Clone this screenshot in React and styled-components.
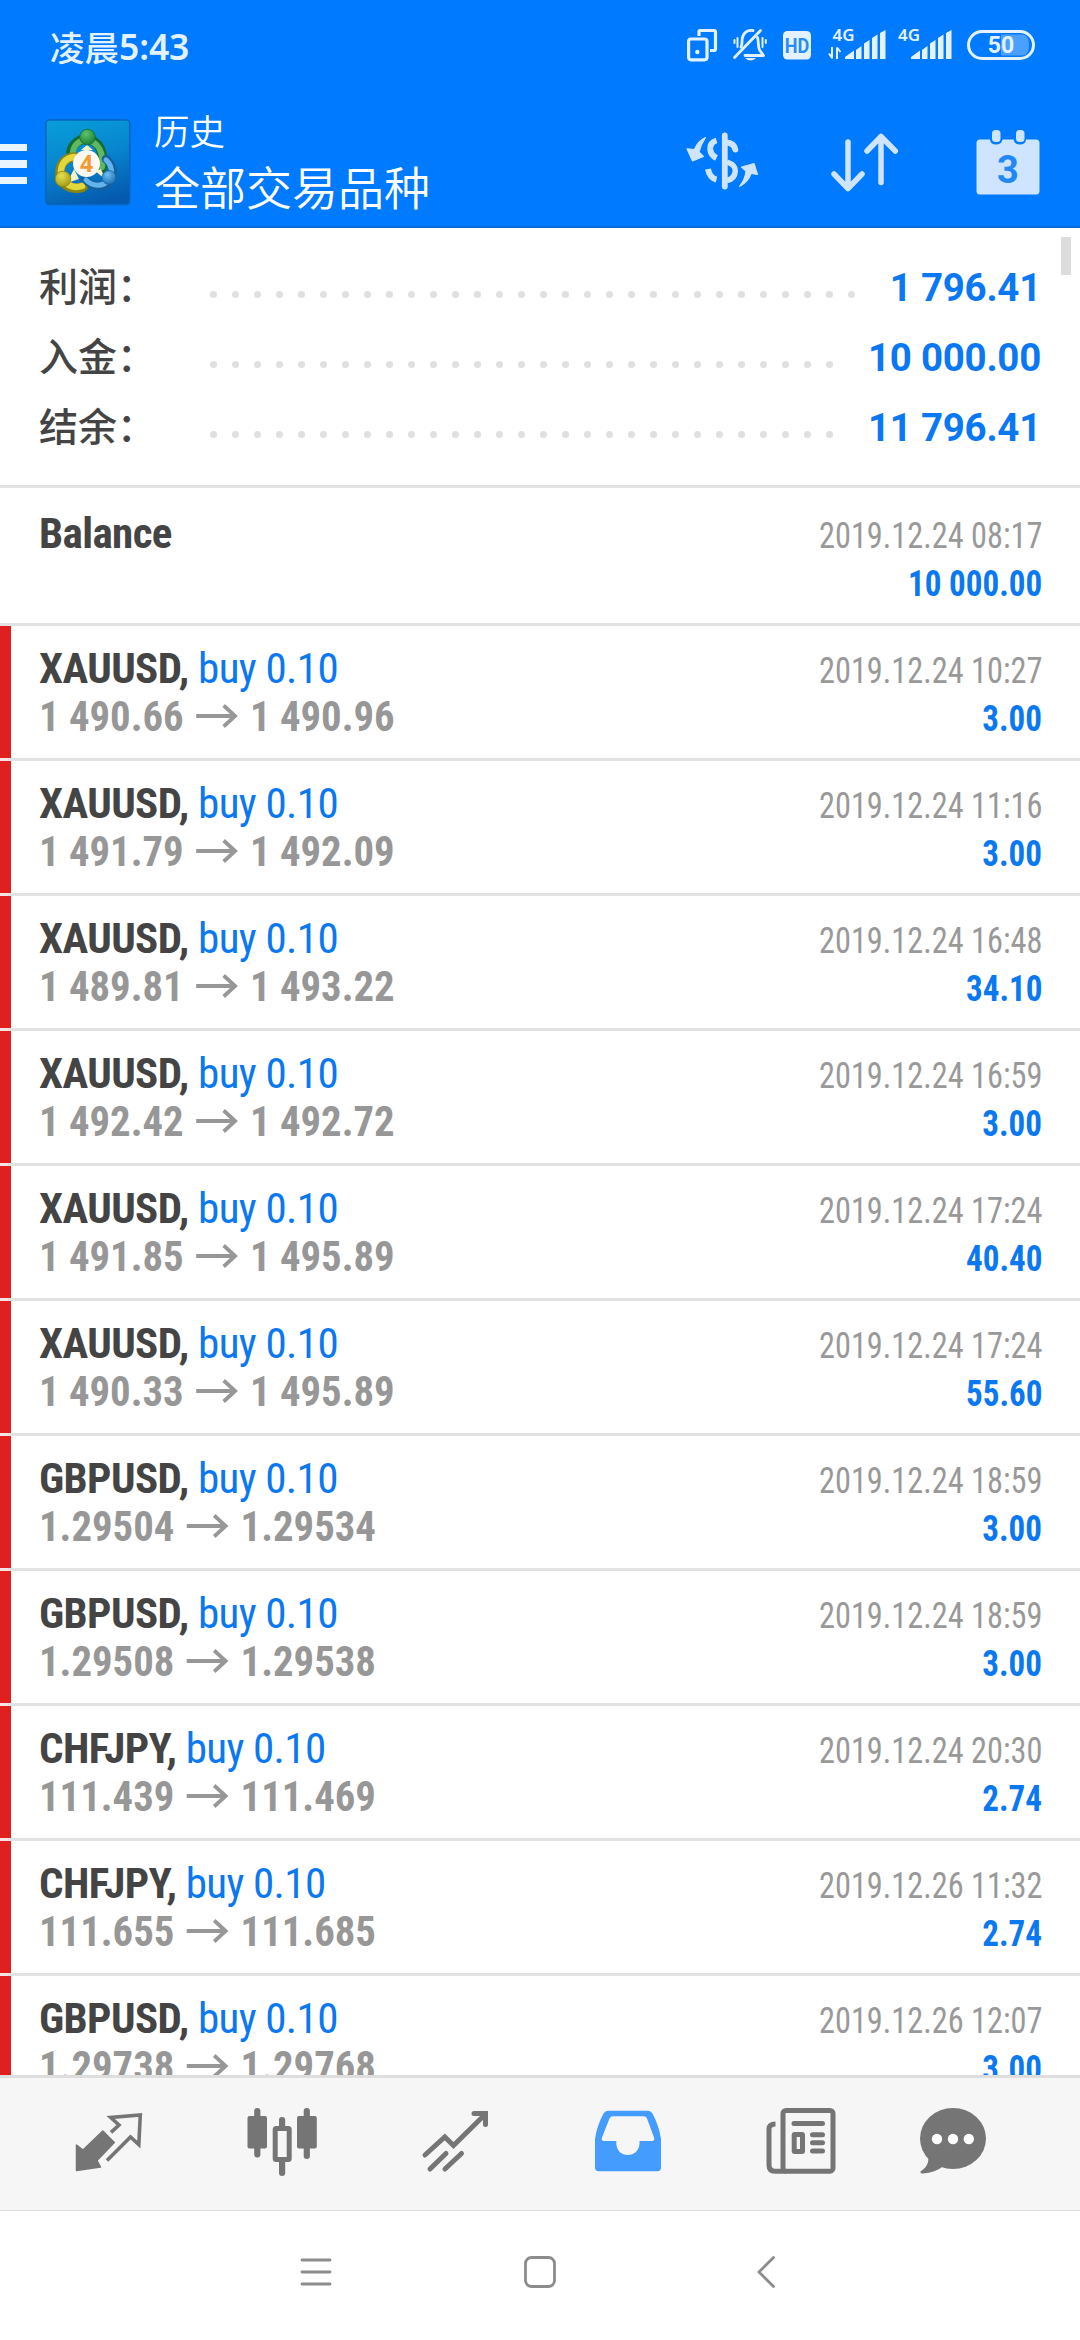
import React from "react";
import styled, { createGlobalStyle } from "styled-components";

const BLUE = "#007aff";
const TINT = "#cfe4ff";
const STATUS = "#e4f2ff";
const LINE = "#e2e2e2";

const GlobalStyle = createGlobalStyle`
  html, body { margin: 0; padding: 0; background: #fff; }
  * { box-sizing: border-box; }
  svg { display: block; flex: none; overflow: visible; }
`;

const Screen = styled.div`
  width: 1080px;
  height: 2340px;
  display: flex;
  flex-direction: column;
  overflow: hidden;
  background: #fff;
  font-family: Roboto, "Noto Sans CJK SC", sans-serif;
`;

/* ---------- top ---------- */

const StatusBar = styled.div`
  flex: none;
  height: 90px;
  padding: 0 45px 0 50px;
  display: flex;
  justify-content: space-between;
  align-items: center;
  background: ${BLUE};
  color: ${STATUS};
`;

const Clock = styled.span`
  display: flex;
  align-items: center;
  font-family: "Noto Sans CJK SC", sans-serif;
  font-size: 34.5px;
  font-weight: 500;
  line-height: 50px;
  padding-top: 1px;
`;

const ClockTime = styled.span`
  font-family: "Noto Sans", sans-serif;
  font-weight: 600;
  font-size: 35.5px;
  letter-spacing: -0.1px;
`;

const StatusIcons = styled.div`
  display: flex;
  align-items: center;
  gap: 16px;
`;

const AppBar = styled.header`
  flex: none;
  height: 138px;
  padding-right: 36px;
  display: flex;
  align-items: center;
  background: ${BLUE};
  border-bottom: 2px solid #0a6ad6;
  color: #fff;
`;

const Burger = styled.div`
  width: 27px;
  display: flex;
  flex-direction: column;
  gap: 9px;
  margin: 12px 18px 0 0;
`;

const BurgerLine = styled.div`
  height: 7.5px;
  background: #e8f4ff;
`;

const Logo = styled.div`
  padding-top: 7px;
`;

const Titles = styled.div`
  flex: 1;
  display: flex;
  flex-direction: column;
  padding: 0 0 0 23px;
  font-family: "Noto Sans CJK SC", sans-serif;
`;

const ScreenName = styled.span`
  font-size: 35.5px;
  line-height: 54px;
  font-weight: 350;
`;

const Filter = styled.span`
  font-size: 46px;
  line-height: 56px;
  font-weight: 350;
`;

const Actions = styled.div`
  display: flex;
  gap: 71px;
  padding-top: 9px;
`;

/* ---------- summary ---------- */

const Summary = styled.section`
  flex: none;
  position: relative;
  height: 257px;
  padding: 23px 39px 0 39px;
`;

const ScrollThumb = styled.div`
  position: absolute;
  top: 9px;
  right: 9px;
  width: 10px;
  height: 38px;
  background: #dcdcdc;
`;

const SummaryRow = styled.div`
  display: flex;
  align-items: center;
  height: 70px;
`;

const SummaryLabel = styled.span`
  width: 163.5px;
  padding-bottom: 4px;
  font-family: "Noto Sans CJK SC", sans-serif;
  font-size: 39px;
  font-weight: 500;
  line-height: 66px;
  color: #444;
`;

const Leader = styled.div`
  flex: 1;
  height: 8px;
  margin: 17px 8px 0 0;
  display: flex;
  flex-wrap: wrap;
  overflow: hidden;
`;

const Dot = styled.i`
  width: 22px;
  height: 8px;
  display: flex;
  justify-content: center;
  &::after {
    content: "";
    width: 7px;
    height: 7px;
    border-radius: 50%;
    background: #e0e0e0;
  }
`;

const SummaryValue = styled.span`
  padding-top: 3px;
  font-size: 38.5px;
  font-weight: 700;
  letter-spacing: -0.25px;
  line-height: 67px;
  color: #0a78f3;
  white-space: pre;
`;

/* ---------- deals ---------- */

const DealList = styled.main`
  flex: 1;
  min-height: 0;
  overflow: hidden;
  font-family: "Roboto Condensed", Roboto, sans-serif;
`;

const Deal = styled.article`
  height: ${(p) => (p.$plain ? 138 : 135)}px;
  border-top: 3px solid ${LINE};
  padding: ${(p) => (p.$plain ? 21 : 18)}px 38px 0 39px;
  display: flex;
  justify-content: space-between;
  ${(p) => !p.$plain && "box-shadow: inset 11px 0 0 #e01f1f;"}
  & + &:nth-child(n + 3) {
    border-image: linear-gradient(to right, #f6e3e3 11px, ${LINE} 11px) 3;
  }
`;

const Column = styled.div`
  display: flex;
  flex-direction: column;
  align-items: ${(p) => (p.$end ? "flex-end" : "flex-start")};
`;

const Title = styled.div`
  font-size: 43px;
  line-height: 48px;
  height: 48px;
  font-weight: 700;
  letter-spacing: -0.6px;
  color: #444;
  white-space: pre;
`;

const Side = styled.span`
  font-weight: 400;
  color: #0a78f0;
`;

const Prices = styled.div`
  display: flex;
  font-size: 43px;
  line-height: 48px;
  font-weight: 700;
  color: #979797;
  white-space: pre;
  transform: scaleX(0.947);
  transform-origin: left;
`;

const DateText = styled.div`
  font-size: 36.5px;
  line-height: 48px;
  height: 48px;
  padding-top: 3px;
  color: #999;
  white-space: pre;
  transform: scaleX(0.885);
  transform-origin: right;
`;

const Amount = styled.div`
  font-size: 36.5px;
  line-height: 48px;
  padding-top: 3px;
  font-weight: 700;
  color: #0a78f0;
  white-space: pre;
  transform: scaleX(0.905);
  transform-origin: right;
`;

/* ---------- bottom ---------- */

const TabBar = styled.nav`
  flex: none;
  height: 136px;
  border-top: 3px solid #dedede;
  border-bottom: 1px solid #dcdcdc;
  background: #f6f6f6;
  padding-left: 22px;
  display: flex;
  align-items: center;
`;

const Tab = styled.div`
  width: ${(p) => (p.$last ? 132 : 173)}px;
  display: flex;
  justify-content: center;
`;

const SystemNav = styled.div`
  flex: none;
  height: 129px;
  display: flex;
  justify-content: center;
  padding-bottom: 7px;
  align-items: center;
  gap: 183px;
  padding-left: 2px;
`;

/* ---------- icons ---------- */

const G = "#757575";

const WindowsIcon = () => (
  <svg width="30" height="34" viewBox="687 28 30 34" fill="none" stroke={STATUS} strokeWidth="3.2">
    <rect x="688.6" y="39" width="18.4" height="20.8" rx="2.5" />
    <path d="M699 36V31.5Q699 30.5 700 30.5H714Q715.5 30.5 715.5 32V49Q715.5 50.5 714 50.5H710" />
    <circle cx="697.3" cy="52" r="2.2" fill={STATUS} stroke="none" />
  </svg>
);

const MutedBellIcon = () => (
  <svg width="34" height="34" viewBox="733 28 34 34" fill="none" stroke={STATUS} strokeWidth="2.8" strokeLinecap="round">
    <path d="M741 47C743 44 741 40 743 36C745 31 749 29.8 753 30.5" />
    <path d="M757.5 37.5C759 41 757.5 46 759.5 50L763.5 55.5H745" strokeLinejoin="round" />
    <path d="M734.5 57.5L760.5 30.5" />
    <path d="M734.5 40V43M737.5 38V47M762.5 38V47M765.8 40V43" strokeWidth="2" />
    <path d="M745 58H756Q750.500 63 745 58Z" fill={STATUS} stroke="none" />
  </svg>
);

const HdIcon = () => (
  <svg width="29" height="29" viewBox="783 31 29 29">
    <rect x="783" y="31" width="28" height="28.500" rx="4.500" fill={STATUS} />
    <text x="797" y="52.500" textAnchor="middle" textLength="24.500" lengthAdjust="spacingAndGlyphs" fontFamily="Roboto" fontWeight="700" fontSize="20.500" fill="#2a8cf8">HD</text>
  </svg>
);

const Bars = ({ x }) => (
  <g fill={STATUS}>
    <path d={`M${x} 59V57L${x + 9} 50.500V59Z`} />
    <path d={`M${x + 11} 59V50L${x + 16.500} 46V59Z`} />
    <path d={`M${x + 19} 59V43.500L${x + 24.500} 40V59Z`} />
    <path d={`M${x + 27} 59V38L${x + 32.500} 34.500V59Z`} />
    <path d={`M${x + 35} 59V33L${x + 40.500} 30V59Z`} />
  </g>
);

const SignalIcon = ({ data }) => {
  const w = data ? 55 : 52;
  return (
    <svg width={w} height="34" viewBox={`0 28 ${w} 34`}>
      <text x={data ? 4.500 : -1} y="41" fontFamily="Noto Sans" fontWeight="600" fontSize="16.500" fill={STATUS} textLength="22" lengthAdjust="spacingAndGlyphs">4G</text>
      {data && <path d="M4 47V58.500M1 53.500L4 58M9 59V47.500M9 47.500L12.500 52" stroke={STATUS} strokeWidth="2" fill="none" />}
      <Bars x={data ? 17 : 12} />
    </svg>
  );
};

const BatteryIcon = () => (
  <svg width="68" height="30" viewBox="967 30 68 30">
    <rect x="968.500" y="31.500" width="65" height="27" rx="13.500" fill="none" stroke={STATUS} strokeWidth="3" />
    <path d="M1001 34.500H1022Q1029 34.500 1029 45Q1029 55.500 1022 55.500H1001Z" fill="#4a9fff" />
    <text x="1001" y="53" textAnchor="middle" fontFamily="Roboto" fontWeight="700" fontSize="23" fill={STATUS}>50</text>
  </svg>
);

const LogoIcon = () => (
  <svg width="86" height="86" viewBox="0 0 86 86">
    <defs>
      <linearGradient id="tile" x1="0.3" y1="0" x2="0.6" y2="1">
        <stop offset="0" stopColor="#089bd8" />
        <stop offset="0.45" stopColor="#0886cf" />
        <stop offset="1" stopColor="#0559ae" />
      </linearGradient>
      <radialGradient id="green" cx="0.4" cy="0.3" r="0.8"><stop offset="0" stopColor="#5cc46a" /><stop offset="1" stopColor="#14772e" /></radialGradient>
      <radialGradient id="yellow" cx="0.4" cy="0.3" r="0.8"><stop offset="0" stopColor="#e9e04a" /><stop offset="1" stopColor="#9a9214" /></radialGradient>
      <radialGradient id="azure" cx="0.4" cy="0.3" r="0.8"><stop offset="0" stopColor="#6cc0f2" /><stop offset="1" stopColor="#1467ae" /></radialGradient>
    </defs>
    <rect x="0.800" y="1" width="84" height="84.500" rx="3.500" fill="url(#tile)" stroke="#0a66bd" strokeWidth="1.600" />
    <g fill="none" strokeLinecap="round">
      <path d="M57 50C60 33 54 22 42 20C32 20 25 28 26 36" stroke="#156b31" strokeWidth="9.500" />
      <path d="M57 48C59 33 53 23 42 21C33 21 27 28 28 36" stroke="#5fb860" strokeWidth="6" />
      <path d="M30 38C20 38 14 46 15 56C16 66 28 72 38 68" stroke="#8b8610" strokeWidth="9.500" />
      <path d="M29 38C20 39 15 46 16 56C18 65 28 70 37 67" stroke="#e2d83c" strokeWidth="6.500" />
      <path d="M61 40C67 45 70 54 65 61C59 70 48 69 40 60" stroke="#185f9e" strokeWidth="8.500" />
      <path d="M61 41C66 45 69 54 64 61C58 68 48 68 41 61" stroke="#62b4ec" strokeWidth="5" />
    </g>
    <path d="M29 50L22 64L34 60ZM50 52L60 60L56 50ZM36 31L42 26L48 31Z" fill="#f3f3c8" />
    <circle cx="42.500" cy="18" r="7.800" fill="url(#green)" stroke="#156b31" strokeWidth="0.800" />
    <circle cx="18" cy="60" r="7.800" fill="url(#yellow)" stroke="#8b8610" strokeWidth="0.800" />
    <circle cx="64" cy="58.500" r="7" fill="url(#azure)" stroke="#185f9e" strokeWidth="0.800" />
    <circle cx="41.500" cy="44.500" r="13.500" fill="#fbf8f3" />
    <text x="41.500" y="53" textAnchor="middle" fontFamily="Open Sans" fontWeight="700" fontSize="23" fill="#f39a35">4</text>
  </svg>
);

const CurrencyIcon = () => (
  <svg width="72" height="66" viewBox="0 0 72 66" fill="none" stroke={TINT} strokeWidth="5">
    <path d="M38.800 5.500V56.500" strokeLinecap="round" strokeWidth="5.800" />
    <path d="M30.500 10.500C25.500 12 24 15 24.200 19C24.600 24 27.500 26.500 30.500 28" strokeWidth="6" />
    <path d="M30.500 49.500C26 48.500 23 44.500 22 39" strokeWidth="6" />
    <path d="M41 12.500C46 13 48.500 15.500 49.300 19.500" strokeLinecap="round" strokeWidth="6" />
    <path d="M41 32C47 34 49.500 37.500 49.300 41C49 46 46 49.500 41 50.500" strokeWidth="5.500" />
    <path d="M19.500 7.500C14 10 10.800 13.500 8.500 19.500L1 18.800L6.500 31L17.500 26.500L13 22C14.500 16 16.500 12 19.500 7.500Z" fill={TINT} strokeWidth="1.200" strokeLinejoin="round" />
    <path d="M53.500 56.500C59 53.500 63 49.500 65 43.500L71.500 44.500L68 33.500L55.500 37L60 41C59.500 47 57 52 53.500 56.500Z" fill={TINT} strokeWidth="1.200" strokeLinejoin="round" />
  </svg>
);

const SortIcon = () => (
  <svg width="72" height="66" viewBox="829.5 129 72 66" fill="none" stroke={TINT} strokeWidth="5.500" strokeLinecap="round" strokeLinejoin="round">
    <path d="M848.500 141V187.500M834.500 173L848.500 187.500L862.500 173" />
    <path d="M881.500 181.500V135.500M867.500 150L881.500 135.500L895.800 150" />
  </svg>
);

const CalendarIcon = () => (
  <svg width="72" height="66" viewBox="972 129 72 66">
    <path d="M980 138.500H990Q990.500 143.500 996 143.500Q1001.500 143.500 1002.500 138.500H1013.500Q1014.500 143.500 1020 143.500Q1025.500 143.500 1026 138.500H1036Q1039.500 138.500 1039.500 142V190Q1039.500 193.500 1036 193.500H980Q976.500 193.500 976.500 190V142Q976.500 138.500 980 138.500Z" fill={TINT} />
    <rect x="992" y="129" width="8.500" height="12" rx="3.500" fill={TINT} />
    <rect x="1016" y="129" width="8.500" height="12" rx="3.500" fill={TINT} />
    <text x="1008" y="181.500" textAnchor="middle" fontFamily="Roboto" fontWeight="700" fontSize="38" fill="#2388f7">3</text>
  </svg>
);

const ArrowBox = styled.span`
  width: 70px;
  display: flex;
  justify-content: center;
  padding-top: 11.5px;
`;

const PriceArrow = () => (
  <ArrowBox>
    <svg width="44" height="24" viewBox="0 0 44 24" fill="none" stroke="#979797" strokeWidth="4">
      <path d="M0 12H42M29 1.500L41 12L29 22.500" />
    </svg>
  </ArrowBox>
);

const TabIcon = ({ x, children, ...rest }) => (
  <svg width="80" height="80" viewBox={`${x} 2104 80 80`} {...rest}>{children}</svg>
);

const QuotesIcon = () => (
  <TabIcon x={68.5} strokeLinejoin="round">
    <path d="M76 2145L82.500 2150L102.300 2131L113.800 2142.500L96.500 2160.500L100 2167L76 2170.500Z" fill={G} stroke={G} strokeWidth="1.500" />
    <path d="M110.500 2132.300L118.500 2125L110.200 2117.500L139.800 2115L138.300 2144.500L130 2137L106.500 2160.500" fill="none" stroke={G} strokeWidth="3.600" strokeLinejoin="miter" />
  </TabIcon>
);

const ChartsIcon = () => (
  <TabIcon x={241} fill={G}>
    <rect x="246.500" y="2116" width="19.500" height="32.500" rx="2" />
    <rect x="253.200" y="2108" width="6.200" height="49.500" rx="3" />
    <rect x="296" y="2116" width="19.800" height="32.500" rx="2" />
    <rect x="302.700" y="2108" width="6.200" height="51" rx="3" />
    <rect x="278" y="2117" width="6.200" height="12" rx="3" />
    <rect x="278" y="2158" width="6.200" height="18" rx="3" />
    <rect x="274.200" y="2128.500" width="14" height="31" rx="1" fill="none" stroke={G} strokeWidth="5" />
  </TabIcon>
);

const TradeIcon = () => (
  <TabIcon x={414} fill="none" stroke={G} strokeWidth="5" strokeLinecap="round">
    <path d="M424 2155L443.800 2137L452.500 2145.500L484 2114.500" strokeLinejoin="miter" />
    <path d="M473 2113.500H484.500V2124.500" strokeLinejoin="miter" />
    <path d="M429 2169L445 2153.500M444 2169L460.500 2153.500" />
  </TabIcon>
);

const InboxIcon = () => (
  <TabIcon x={587.5}>
    <path fillRule="evenodd" fill="#459cff" d="M607.500 2110.700H647.500Q650.500 2110.700 652 2113.500C656 2121 659 2129 660.500 2139V2167.500Q660.500 2171.300 656.700 2171.300H598.300Q594.500 2171.300 594.500 2167.500V2139C596 2129 599 2121 603 2113.500Q604.500 2110.700 607.500 2110.700ZM612.500 2116.200Q610 2116.200 609 2118.500L601.500 2137.500Q600.500 2141 603.500 2141H615.800V2144C616.500 2151 621 2155 627.300 2155C633.500 2155 638.300 2151 639 2144V2141H651.500Q654.500 2141 653.500 2137.500L646.500 2118.500Q645.500 2116.200 643 2116.200Z" />
  </TabIcon>
);

const NewsIcon = () => (
  <TabIcon x={761} fill="none" stroke={G} strokeWidth="5">
    <rect x="783" y="2110.500" width="50" height="60.700" rx="3" />
    <path d="M775.500 2124C771 2124 769 2125.500 769 2129V2165Q769 2171.200 775 2171.200H786" />
    <path d="M794 2123.500H822.500M812.500 2134.700H822.500M812.500 2142.800H822.500M812.500 2151H822.500" strokeLinecap="round" />
    <rect x="794.200" y="2134.500" width="8.300" height="17" rx="0.500" />
  </TabIcon>
);

const ChatIcon = () => (
  <TabIcon x={913} fill={G}>
    <ellipse cx="953" cy="2138.500" rx="33" ry="30.500" />
    <path d="M928 2156C929.500 2163 926 2168 920.500 2171.500Q920 2173.500 923 2173.500C931 2173 938 2170.500 943.500 2166Z" />
    <circle cx="937" cy="2139" r="5.200" fill="#fff" />
    <circle cx="953" cy="2139" r="5.200" fill="#fff" />
    <circle cx="968.800" cy="2139" r="5.200" fill="#fff" />
  </TabIcon>
);

const RecentsIcon = () => (
  <svg width="42" height="42" viewBox="0 0 42 42" stroke="#8c8c8c" strokeWidth="2.800" strokeLinecap="round">
    <path d="M7 9H35M7 21H35M7 33H35" />
  </svg>
);

const HomeIcon = () => (
  <svg width="42" height="42" viewBox="0 0 42 42" fill="none" stroke="#8c8c8c" strokeWidth="2.800">
    <rect x="5.500" y="6.500" width="29" height="29" rx="6" />
  </svg>
);

const BackIcon = () => (
  <svg width="42" height="42" viewBox="0 0 42 42" fill="none" stroke="#8c8c8c" strokeWidth="2.800" strokeLinecap="round">
    <path d="M28.500 6.500L14 21L28.500 35.500" />
  </svg>
);

/* ---------- data ---------- */

const totals = [
  ["利润：", "1 796.41"],
  ["入金：", "10 000.00"],
  ["结余：", "11 796.41"],
];

const deals = [
  ["XAUUSD", "1 490.66", "1 490.96", "2019.12.24 10:27", "3.00"],
  ["XAUUSD", "1 491.79", "1 492.09", "2019.12.24 11:16", "3.00"],
  ["XAUUSD", "1 489.81", "1 493.22", "2019.12.24 16:48", "34.10"],
  ["XAUUSD", "1 492.42", "1 492.72", "2019.12.24 16:59", "3.00"],
  ["XAUUSD", "1 491.85", "1 495.89", "2019.12.24 17:24", "40.40"],
  ["XAUUSD", "1 490.33", "1 495.89", "2019.12.24 17:24", "55.60"],
  ["GBPUSD", "1.29504", "1.29534", "2019.12.24 18:59", "3.00"],
  ["GBPUSD", "1.29508", "1.29538", "2019.12.24 18:59", "3.00"],
  ["CHFJPY", "111.439", "111.469", "2019.12.24 20:30", "2.74"],
  ["CHFJPY", "111.655", "111.685", "2019.12.26 11:32", "2.74"],
  ["GBPUSD", "1.29738", "1.29768", "2019.12.26 12:07", "3.00"],
];

export default function App() {
  return (
    <Screen>
      <GlobalStyle />
      <StatusBar>
        <Clock>凌晨<ClockTime>5:43</ClockTime></Clock>
        <StatusIcons>
          <WindowsIcon />
          <MutedBellIcon />
          <HdIcon />
          <SignalIcon data />
          <SignalIcon />
          <BatteryIcon />
        </StatusIcons>
      </StatusBar>
      <AppBar>
        <Burger>
          <BurgerLine />
          <BurgerLine />
          <BurgerLine />
        </Burger>
        <Logo><LogoIcon /></Logo>
        <Titles>
          <ScreenName>历史</ScreenName>
          <Filter>全部交易品种</Filter>
        </Titles>
        <Actions>
          <CurrencyIcon />
          <SortIcon />
          <CalendarIcon />
        </Actions>
      </AppBar>
      <Summary>
        <ScrollThumb />
        {totals.map(([label, value]) => (
          <SummaryRow key={label}>
            <SummaryLabel>{label}</SummaryLabel>
            <Leader>
              {Array.from({ length: 36 }, (_, i) => <Dot key={i} />)}
            </Leader>
            <SummaryValue>{value}</SummaryValue>
          </SummaryRow>
        ))}
      </Summary>
      <DealList>
        <Deal $plain>
          <Column><Title>Balance</Title></Column>
          <Column $end>
            <DateText>2019.12.24 08:17</DateText>
            <Amount>10 000.00</Amount>
          </Column>
        </Deal>
        {deals.map(([symbol, open, close, time, profit]) => (
          <Deal key={open}>
            <Column>
              <Title>{symbol}, <Side>buy 0.10</Side></Title>
              <Prices>{open}<PriceArrow />{close}</Prices>
            </Column>
            <Column $end>
              <DateText>{time}</DateText>
              <Amount>{profit}</Amount>
            </Column>
          </Deal>
        ))}
      </DealList>
      <TabBar>
        <Tab><QuotesIcon /></Tab>
        <Tab><ChartsIcon /></Tab>
        <Tab><TradeIcon /></Tab>
        <Tab><InboxIcon /></Tab>
        <Tab><NewsIcon /></Tab>
        <Tab $last><ChatIcon /></Tab>
      </TabBar>
      <SystemNav>
        <RecentsIcon />
        <HomeIcon />
        <BackIcon />
      </SystemNav>
    </Screen>
  );
}
